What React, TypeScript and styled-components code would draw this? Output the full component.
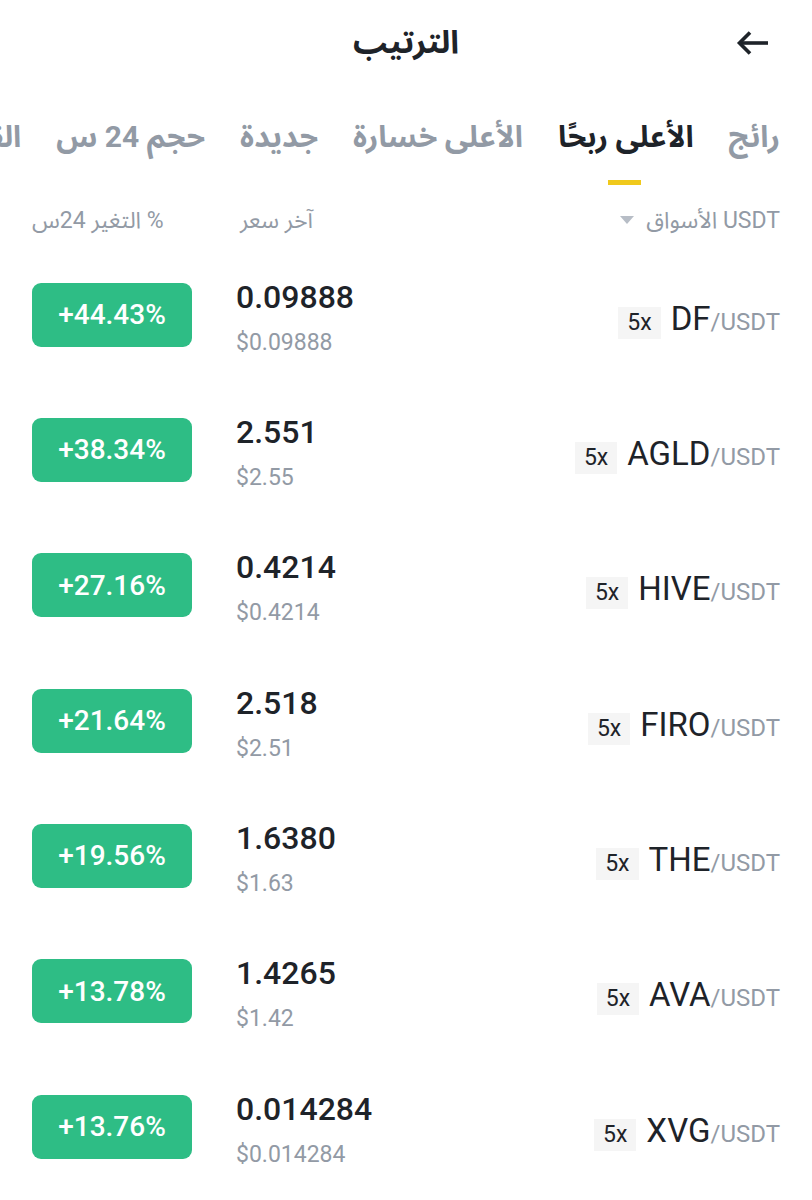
import styled, { createGlobalStyle } from "styled-components";

const GlobalStyle = createGlobalStyle`
  html, body {
    margin: 0;
    padding: 0;
    background: #ffffff;
  }
  body {
    font-family: Roboto, "Noto Sans Arabic", "Noto Kufi Arabic", "DejaVu Sans", sans-serif;
    color: #1e2329;
  }
`;

type Market = {
  base: string;
  price: string;
  usd: string;
  change: string;
};

const MARKETS: Market[] = [
  { base: "DF", price: "0.09888", usd: "$0.09888", change: "+44.43%" },
  { base: "AGLD", price: "2.551", usd: "$2.55", change: "+38.34%" },
  { base: "HIVE", price: "0.4214", usd: "$0.4214", change: "+27.16%" },
  { base: "FIRO", price: "2.518", usd: "$2.51", change: "+21.64%" },
  { base: "THE", price: "1.6380", usd: "$1.63", change: "+19.56%" },
  { base: "AVA", price: "1.4265", usd: "$1.42", change: "+13.78%" },
  { base: "XVG", price: "0.014284", usd: "$0.014284", change: "+13.76%" },
];

const TABS = ["رائج", "الأعلى ربحًا", "الأعلى خسارة", "جديدة", "حجم 24 س", "القيمة السوقية"];

export default function App() {
  return (
    <>
      <GlobalStyle />
      <St.Page>
        <St.Header>
          <St.Title>الترتيب</St.Title>
          <St.BackButton aria-label="back">
            <svg width="34" height="26" viewBox="0 0 34 26" fill="none">
              <path d="M32 13H4" stroke="#1e2329" strokeWidth="3.6" />
              <path d="M14 2.5L3.5 13L14 23.5" stroke="#1e2329" strokeWidth="3.6" strokeLinejoin="miter" />
            </svg>
          </St.BackButton>
        </St.Header>

        <St.Tabs dir="rtl">
          {TABS.map((tab, i) => (
            <St.Tab key={tab} $active={i === 1}>
              {tab}
            </St.Tab>
          ))}
        </St.Tabs>

        <St.ColumnHeads>
          <St.HeadCell dir="rtl">% التغير 24س</St.HeadCell>
          <St.HeadCell dir="rtl" $indent>
            آخر سعر
          </St.HeadCell>
          <St.HeadRight>
            <St.Caret />
            <span dir="rtl">USDT الأسواق</span>
          </St.HeadRight>
        </St.ColumnHeads>

        <St.List>
          {MARKETS.map((m) => (
            <St.Row key={m.base}>
              <St.Change>{m.change}</St.Change>
              <St.PriceCol>
                <St.Price>{m.price}</St.Price>
                <St.Usd>{m.usd}</St.Usd>
              </St.PriceCol>
              <St.Pair>
                <St.Leverage>5x</St.Leverage>
                <St.Base>{m.base}</St.Base>
                <St.Quote>/USDT</St.Quote>
              </St.Pair>
            </St.Row>
          ))}
        </St.List>
      </St.Page>
    </>
  );
}

const St = {
  Page: styled.div`
    width: 812px;
    height: 1200px;
    overflow: hidden;
    background: #ffffff;
  `,

  Header: styled.header`
    position: relative;
    height: 88px;
    display: flex;
    align-items: center;
    justify-content: center;
  `,

  Title: styled.h1`
    margin: 0;
    font-size: 32px;
    line-height: 44px;
    font-weight: 700;
    color: #1e2329;
    transform: translateY(-2px);
  `,

  BackButton: styled.div`
    position: absolute;
    right: 42px;
    top: 30px;
    display: flex;
  `,

  Tabs: styled.nav`
    display: flex;
    gap: 35px;
    padding: 0 32px;
    height: 105px;
    overflow: hidden;
    white-space: nowrap;
  `,

  Tab: styled.div<{ $active?: boolean }>`
    position: relative;
    flex-shrink: 0;
    padding-top: 29px;
    font-size: 30px;
    line-height: 40px;
    font-weight: 700;
    color: ${({ $active }) => ($active ? "#1e2329" : "#929aa5")};

    &::after {
      content: "";
      display: ${({ $active }) => ($active ? "block" : "none")};
      position: absolute;
      left: 50%;
      top: 92px;
      width: 33px;
      height: 5px;
      margin-left: -18px;
      background: #f0c91c;
    }
  `,

  ColumnHeads: styled.div`
    display: grid;
    grid-template-columns: 160px 1fr auto;
    column-gap: 44px;
    align-items: center;
    padding: 0 32px;
    height: 54px;
    font-size: 23px;
    color: #929aa5;
  `,

  HeadCell: styled.div<{ $indent?: boolean }>`
    justify-self: start;
    margin-left: ${({ $indent }) => ($indent ? "4px" : "0")};
    white-space: nowrap;
  `,

  HeadRight: styled.div`
    display: flex;
    align-items: center;
    gap: 12px;
  `,

  Caret: styled.span`
    width: 0;
    height: 0;
    border-left: 7px solid transparent;
    border-right: 7px solid transparent;
    border-top: 8px solid #b7bdc6;
  `,

  List: styled.div`
    display: flex;
    flex-direction: column;
  `,

  Row: styled.div`
    display: grid;
    grid-template-columns: 160px 1fr auto;
    column-gap: 44px;
    align-items: center;
    padding: 0 32px;
    height: 135.33px;
  `,

  Change: styled.div`
    height: 64px;
    border-radius: 9px;
    background: #2ebd85;
    color: #ffffff;
    font-size: 28px;
    font-weight: 500;
    display: flex;
    align-items: center;
    justify-content: center;
  `,

  PriceCol: styled.div`
    display: flex;
    flex-direction: column;
    gap: 14px;
    padding-top: 6px;
  `,

  Price: styled.div`
    font-size: 32px;
    font-weight: 500;
    line-height: 36px;
    color: #1e2329;
  `,

  Usd: styled.div`
    font-size: 23px;
    line-height: 28px;
    color: #929aa5;
  `,

  Pair: styled.div`
    display: flex;
    align-items: baseline;
    padding-top: 8px;
  `,

  Leverage: styled.span`
    background: #f5f5f5;
    font-size: 23px;
    line-height: 32px;
    padding: 0 9px;
    margin-right: 10px;
    color: #1e2329;
  `,

  Base: styled.span`
    font-size: 33px;
    color: #1e2329;
  `,

  Quote: styled.span`
    font-size: 24px;
    color: #929aa5;
  `,
};
